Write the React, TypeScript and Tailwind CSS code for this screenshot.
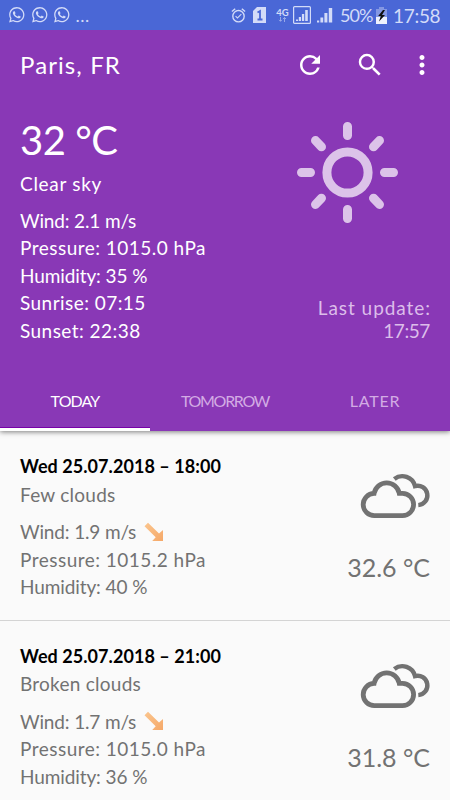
// App.tsx
import React from 'react';
import { FaWhatsapp } from 'react-icons/fa';
import { MdMoreVert, MdRefresh, MdSearch, MdOutlineAlarmOn } from 'react-icons/md';

interface ForecastRowProps {
  date: string;
  description: string;
  wind: string;
  pressure: string;
  humidity: string;
  temperature: string;
}

const forecast: ForecastRowProps[] = [
  {
    date: 'Wed 25.07.2018 – 18:00',
    description: 'Few clouds',
    wind: '1.9 m/s',
    pressure: '1015.2 hPa',
    humidity: '40 %',
    temperature: '32.6 °C',
  },
  {
    date: 'Wed 25.07.2018 – 21:00',
    description: 'Broken clouds',
    wind: '1.7 m/s',
    pressure: '1015.0 hPa',
    humidity: '36 %',
    temperature: '31.8 °C',
  },
];

const SignalBars = ({ boxed = false }: { boxed?: boolean }) => (
  <svg width="18" height="18" viewBox="0 0 18 18" fill="currentColor">
    {boxed && (
      <rect x="0.6" y="0.6" width="16.8" height="16.8" rx="1" fill="none" stroke="currentColor" strokeWidth="1.2" />
    )}
    {boxed ? (
      <path d="M3 13.5h2V15H3zM5.8 11h2.2v4H5.8zM8.9 8h2.3v7H8.9zM12.2 4h2.6v11h-2.6z" />
    ) : (
      <path d="M1 14.5h2.2v2H1zM4.4 11.5h2.8v5H4.4zM8.4 7h3v9.5h-3zM12.8 2h3.4v14.5h-3.4z" />
    )}
  </svg>
);

const StatusBar = () => (
  <div className="relative z-10 flex h-[30px] items-center justify-between bg-[#4a67d6] pl-[8px] pr-[10px] text-[#d3dbf8]">
    <div className="flex items-center gap-[5px]">
      <FaWhatsapp size={17.5} />
      <FaWhatsapp size={17.5} />
      <FaWhatsapp size={17.5} />
      <span className="text-[18px] leading-none tracking-[0.5px]">...</span>
    </div>
    <div className="flex items-center">
      <MdOutlineAlarmOn size={17} />
      <svg className="ml-[6px]" width="14" height="16" viewBox="0 0 14 16">
        <path d="M4 0h9v16H0V4z" fill="currentColor" />
        <path d="M4.5 5.5 7 4v8.5M4.5 12.5h5" fill="none" stroke="#4a67d6" strokeWidth="1.8" />
      </svg>
      <div className="ml-[9px] flex w-[13px] flex-col items-center">
        <span className="text-[9.5px] font-bold leading-[9px]">4G</span>
        <svg width="9" height="5" viewBox="0 0 9 5" fill="none" stroke="currentColor" strokeWidth="0.8" opacity="0.7">
          <path d="M2.5 0v4.2M1 2.8l1.5 1.5L4 2.8M6.5 5V.6M5 2l1.5-1.5L8 2" />
        </svg>
      </div>
      <div className="ml-[4px] flex gap-[5px]">
        <SignalBars boxed />
        <SignalBars />
      </div>
      <span className="ml-[6px] w-[32px] whitespace-nowrap text-[18px] leading-none tracking-[-1px]">50%</span>
      <svg className="ml-[4px]" width="11" height="17" viewBox="0 0 11 17">
        <path d="M3 0h5v2h3v15H0V2h3z" fill="#8497e3" />
        <path d="M0 10h11v7H0z" fill="#eef1fd" />
        <path d="M7 3 2.2 9h2.6L3 14.5 9 8H6l3-5z" fill="#111" />
      </svg>
      <span className="ml-[6px] w-[47px] whitespace-nowrap text-[19px] leading-none tracking-[-0.3px]">17:58</span>
    </div>
  </div>
);

const Sun = () => (
  <svg
    width="101"
    height="101"
    viewBox="-50.5 -50.5 101 101"
    fill="none"
    stroke="#dcc3e9"
    strokeWidth="9"
    strokeLinecap="round"
  >
    <circle r="20.6" />
    <path d="M0-46v9M0 46v-9M-46 0h9M46 0h-9M-32-32l6 6.3M32-32l-6 6.3M-32 32l6-6.3M32 32l-6-6.3" />
  </svg>
);

const Clouds = () => (
  <svg width="71" height="47" viewBox="0 0 71 47" fill="none" stroke="#727272" strokeWidth="4.8">
    <path d="M14.5 43.6h28a11.1 11.1 0 0 0 0-22.2h-3.2a12.8 12.8 0 0 0-25.2 0a11.1 11.1 0 0 0 .4 22.2z" />
    <path d="M34.3 7A13 13 0 0 1 55 14.1a9.7 9.7 0 1 1 3.3 19" strokeWidth="4.4" />
  </svg>
);

const WindArrow = () => (
  <svg width="20" height="20" viewBox="0 0 20 20">
    <defs>
      <linearGradient id="wind" x1="0" y1="0" x2="1" y2="1">
        <stop offset="0" stopColor="#fbc68f" />
        <stop offset="1" stopColor="#f5a868" />
      </linearGradient>
    </defs>
    <path d="M.5 4.2 4 .7 15 11.6 19 8v11H8.2l3.5-3.7z" fill="url(#wind)" />
  </svg>
);

const ForecastRow: React.FC<ForecastRowProps> = ({
  date,
  description,
  wind,
  pressure,
  humidity,
  temperature,
}) => (
  <div className="flex h-[189.5px] justify-between border-b border-[#d4d4d4] pl-5 pr-[19px] pt-[22px] text-[19px] leading-[27.5px] text-[#727272]">
    <div className="whitespace-nowrap">
      <p className="text-[18px] font-bold tracking-[0.06px] text-black">{date}</p>
      <p className="tracking-[0.25px]">{description}</p>
      <div className="mt-[10px] flex items-center gap-[7.5px]">
        <p className="tracking-[-0.15px]">Wind: {wind}</p>
        <WindArrow />
      </div>
      <p className="tracking-[0.48px]">Pressure: {pressure}</p>
      <p className="tracking-[-0.1px]">Humidity: {humidity}</p>
    </div>
    <div className="flex flex-col items-end pt-[19px]">
      <Clouds />
      <p className="mr-px mt-[31px] whitespace-nowrap text-[25px] leading-[34px]">{temperature}</p>
    </div>
  </div>
);

const App = () => (
  <div className="h-[800px] w-[450px] overflow-hidden bg-[#fafafa] font-['Lato',sans-serif]">
    <StatusBar />
    <div className="relative flex h-[401px] flex-col bg-[#8938b6] text-white shadow-[0_1px_5px_rgba(0,0,0,0.5)]">
      <div className="flex h-[70px] items-center justify-between pl-5 pr-[13px]">
        <h1 className="text-[24px] tracking-[1.1px]">Paris, FR</h1>
        <div className="flex items-center gap-[29px]">
          <MdRefresh size={30} />
          <MdSearch size={30} className="ml-px" />
          <MdMoreVert size={30} className="-ml-[7px]" />
        </div>
      </div>
      <div className="flex flex-1 justify-between pl-5 pr-5">
        <div className="whitespace-nowrap pt-[15px] text-[19px] leading-[27.5px]">
          <p className="text-[40px] leading-[50px] tracking-[-0.5px]">32 °C</p>
          <p className="mt-[5px] tracking-[0.7px]">Clear sky</p>
          <div className="mt-[9px]">
            <p className="tracking-[-0.15px]">Wind: 2.1 m/s</p>
            <p className="tracking-[0.48px]">Pressure: 1015.0 hPa</p>
            <p className="tracking-[-0.1px]">Humidity: 35 %</p>
            <p className="tracking-[0.45px]">Sunrise: 07:15</p>
            <p className="tracking-[0.45px]">Sunset: 22:38</p>
          </div>
        </div>
        <div className="flex flex-col items-end pt-[22px]">
          <div className="pr-[32px]">
            <Sun />
          </div>
          <div className="mt-[73px] text-right text-[19px] leading-[23px] text-[#dcbdea]">
            <p className="-mr-px tracking-[0.95px]">Last update:</p>
            <p className="tracking-[-0.4px]">17:57</p>
          </div>
        </div>
      </div>
      <div className="flex h-[60px] text-[16px] text-[#d3abe4]">
        <div className="flex flex-1 flex-col text-white">
          <p className="flex flex-1 items-center justify-center pt-[4px] tracking-[-0.9px]">TODAY</p>
          <div className="h-[4px] border-t border-[#7800a8] bg-white" />
        </div>
        <p className="flex flex-1 items-center justify-center tracking-[-1.3px]">TOMORROW</p>
        <p className="flex flex-1 items-center justify-center tracking-[0.8px]">LATER</p>
      </div>
    </div>
    {forecast.map((item) => (
      <ForecastRow key={item.date} {...item} />
    ))}
  </div>
);

export default App;
